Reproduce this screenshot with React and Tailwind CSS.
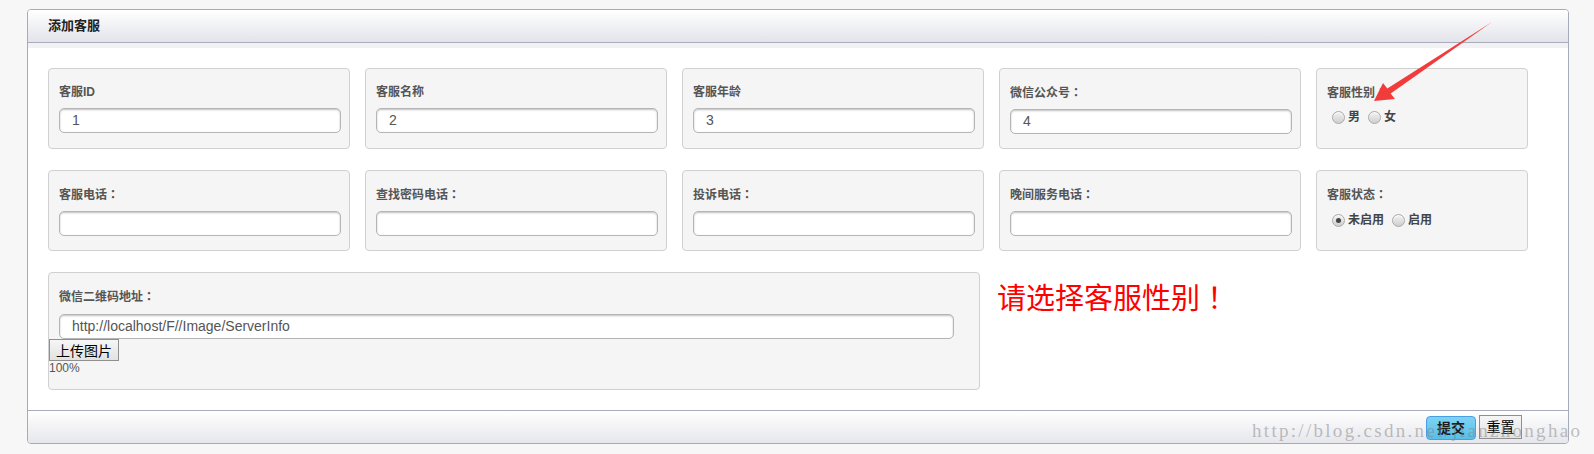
import React from 'react';

const font = { fontFamily: '"Liberation Sans", Arial, "Noto Sans CJK SC", sans-serif' };
const tc = { fontFamily: '"Noto Sans CJK TC", sans-serif' };

// trailing full-width colon sits centred in its box, as in the original font
function Label({ text }) {
  const colon = text.endsWith('：');
  const body = colon ? text.slice(0, -1) : text;
  return (
    <span>
      {body}
      {colon && <span style={tc}>：</span>}
    </span>
  );
}

function Field({ label, value = '' }) {
  return (
    <div className="w-[302px] h-[81px] shrink-0 rounded-[4px] border border-[#d0d0d0] bg-[#f5f5f5] px-[10px] pt-[15px]">
      <div className="text-[12px] leading-[16px] font-bold text-[#555]">
        <Label text={label} />
      </div>
      <div className="mt-[8px] h-[25px] w-[282px] rounded-[5px] border border-[#b5b5b5] bg-white pl-[12px] text-[14px] leading-[23px] text-[#555] shadow-[inset_0_1px_2px_rgba(0,0,0,0.25)]">
        {value}
      </div>
    </div>
  );
}

function Radio({ checked, label }) {
  return (
    <span className="inline-flex items-center">
      <span className="ml-[5px] mr-[3px] inline-flex h-[13px] w-[13px] items-center justify-center rounded-full border border-[#a9a9a9] bg-gradient-to-b from-[#f2f2f2] to-[#cfcfcf] shadow-[inset_0_1px_1px_rgba(255,255,255,0.8)]">
        {checked && <span className="h-[5px] w-[5px] rounded-full bg-[#444]" />}
      </span>
      <span className="text-[12px] font-bold text-[#444] mr-[3px]">{label}</span>
    </span>
  );
}

function RadioField({ label, options, top }) {
  return (
    <div className="w-[212px] h-[81px] shrink-0 rounded-[4px] border border-[#d0d0d0] bg-[#f5f5f5] px-[10px] pt-[15px]">
      <div className="text-[12px] leading-[16px] font-bold text-[#555]">
        <Label text={label} />
      </div>
      <div className={`flex items-center ${top}`}>
        {options.map((o) => (
          <Radio key={o.label} label={o.label} checked={o.checked} />
        ))}
      </div>
    </div>
  );
}

export default function App() {
  return (
    <div className="relative w-[1594px] h-[454px] bg-[#f7f7f7] pl-[27px] pt-[9px] overflow-hidden" style={font}>
      <div className="w-[1542px] h-[435px] rounded-[4px] border border-[#a7aab8] bg-white overflow-hidden flex flex-col">
        <div className="h-[33px] shrink-0 border-b border-[#a9acba] bg-gradient-to-b from-white to-[#e3e4ea] pl-[20px] flex items-center">
          <span className="text-[13px] font-bold text-[#222]">添加客服</span>
        </div>
        <div className="h-[5px] shrink-0 bg-[#f2f2f4]" />

        <div className="flex-1 px-[20px] pt-[20px] flex flex-col gap-[21px]">
          <div className="flex gap-[15px]">
            <Field label="客服ID" value="1" />
            <Field label="客服名称" value="2" />
            <Field label="客服年龄" value="3" />
            <Field label="微信公众号：" value="4" />
            <RadioField
              label="客服性别："
              top="mt-[7px]"
              options={[{ label: '男' }, { label: '女' }]}
            />
          </div>
          <div className="flex gap-[15px]">
            <Field label="客服电话：" />
            <Field label="查找密码电话：" />
            <Field label="投诉电话：" />
            <Field label="晚间服务电话：" />
            <RadioField
              label="客服状态："
              top="mt-[8px]"
              options={[{ label: '未启用', checked: true }, { label: '启用' }]}
            />
          </div>
          <div className="flex">
            <div className="w-[932px] h-[118px] shrink-0 rounded-[4px] border border-[#d0d0d0] bg-[#f5f5f5] pt-[15px]">
              <div className="px-[10px] text-[12px] leading-[16px] font-bold text-[#555]">
                <Label text="微信二维码地址：" />
              </div>
              <div className="ml-[10px] mt-[9px] h-[25px] w-[895px] rounded-[5px] border border-[#b5b5b5] bg-white pl-[12px] text-[14px] leading-[23px] text-[#555] shadow-[inset_0_1px_2px_rgba(0,0,0,0.25)]">
                http://localhost/F//Image/ServerInfo
              </div>
              <div className="h-[22px] w-[70px] border border-[#8f8f8f] bg-gradient-to-b from-[#f6f6f6] to-[#e2e2e2] text-[14px] leading-[20px] text-black text-center" style={{ fontFamily: '"Noto Sans CJK SC", sans-serif' }}>
                上传图片
              </div>
              <div className="text-[12px] leading-[14px] text-[#555]">100%</div>
            </div>
            <div className="ml-[17px] mt-[6px] text-[29px] leading-[36px] text-[#ff0000]" style={{ fontFamily: '"Noto Sans CJK SC", sans-serif' }}>
              请选择客服性别<span style={tc}>！</span>
            </div>
          </div>
        </div>

        <div className="h-[33px] shrink-0 border-t border-[#a9acba] bg-gradient-to-b from-white to-[#e6e7ec] flex items-center justify-end pr-[46px] pt-[2px] gap-[3px]">
          <div className="h-[24px] w-[50px] rounded-[4px] border border-[#4a9ee6] bg-gradient-to-b from-[#7dd3f3] to-[#55bfea] text-[14px] leading-[22px] font-bold text-[#1a1a1a] text-center">
            提交
          </div>
          <div className="h-[24px] w-[43px] border border-[#8f8f8f] bg-gradient-to-b from-[#f6f6f6] to-[#e2e2e2] text-[14px] leading-[22px] text-black text-center mb-[2px]">
            重置
          </div>
        </div>
      </div>

      <div className="absolute left-[1252px] top-[420px] text-[19px] leading-[22px] tracking-[2.3px] text-[rgba(130,130,130,0.5)] pointer-events-none whitespace-nowrap" style={{ fontFamily: '"Liberation Serif", serif' }}>
        http://blog.csdn.net/jianzhonghao
      </div>

      <svg className="absolute left-0 top-0 pointer-events-none" width="1594" height="454">
        <polygon points="1374,101 1383,83 1387.3,88.5 1492,22 1390.7,93.5 1395,99" fill="#f23c3c" />
      </svg>
    </div>
  );
}
